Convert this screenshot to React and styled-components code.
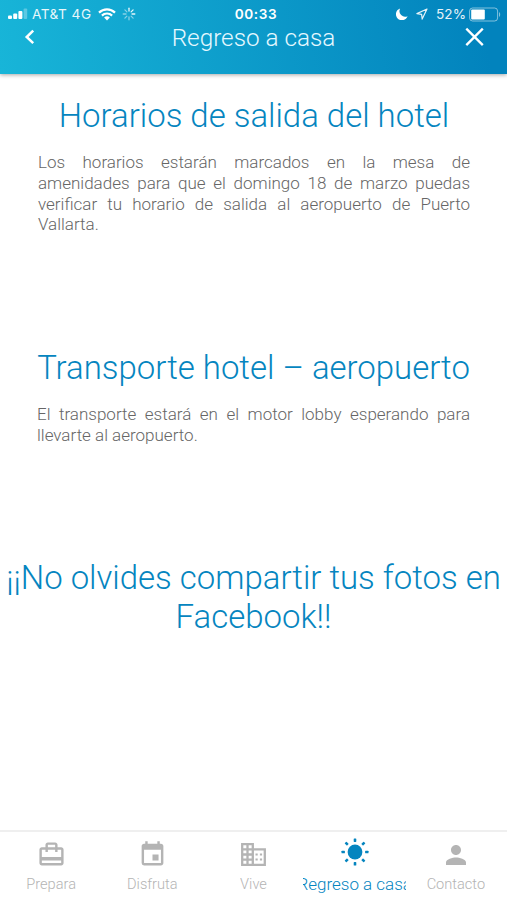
import React from "react";
import styled, { createGlobalStyle } from "styled-components";
import { MdCardTravel, MdEvent, MdPerson } from "react-icons/md";

const GlobalStyle = createGlobalStyle`
  * { box-sizing: border-box; }
  body { margin: 0; background: #fff; font-family: Roboto, "Liberation Sans", sans-serif; }
`;

const Screen = styled.div`
  width: 507px;
  height: 900px;
  display: flex;
  flex-direction: column;
  background: #fff;
  overflow: hidden;
`;

const Header = styled.header`
  flex: none;
  height: 74px;
  color: #fff;
  background: linear-gradient(81deg, #18b5d8 0%, #0283bd 95%);
  box-shadow: 0 1px 4px rgba(0, 0, 0, 0.35);
`;

const StatusBar = styled.div`
  height: 26px;
  padding: 1px 6px 0 8px;
  display: grid;
  grid-template-columns: 1fr auto 1fr;
  align-items: center;
  font-family: Inter, sans-serif;
  font-size: 13.6px;
  line-height: 26px;
`;

const StatusGroup = styled.div`
  display: flex;
  align-items: center;
  justify-content: ${(p) => (p.$end ? "flex-end" : "flex-start")};
  white-space: nowrap;
  svg { flex: none; display: block; }
`;

const StatusText = styled.span`
  margin: ${(p) => p.$margin || 0};
  letter-spacing: ${(p) => p.$spacing || 0};
  opacity: 0.9;
`;

const Clock = styled.span`
  font-weight: 600;
  font-size: 13.6px;
  letter-spacing: 0.6px;
  padding-left: 3px;
`;

const TitleBar = styled.div`
  height: 48px;
  padding: 0 22px 0 24px;
  display: grid;
  grid-template-columns: 20px 1fr 20px;
  align-items: start;
  svg { display: block; }
`;

const Title = styled.h1`
  margin: -2px 2px 0 0;
  text-align: center;
  font-size: 24.3px;
  font-weight: 300;
  line-height: 28px;
  color: #e6f8ff;
`;

const Main = styled.main`
  flex: 1;
  display: flex;
  flex-direction: column;
`;

const Section = styled.section`
  height: ${(p) => p.$height};
  padding: ${(p) => p.$padding};
`;

const Heading = styled.h2`
  margin: 0;
  text-align: center;
  white-space: nowrap;
  font-size: 32.95px;
  font-weight: 300;
  line-height: 39px;
  color: #0585bf;
`;

const Paragraph = styled.p`
  margin: 17px 0 0;
  text-align: justify;
  font-size: 17px;
  font-weight: 300;
  line-height: 20.8px;
  color: #666;
`;

const TabBar = styled.nav`
  flex: none;
  height: 70px;
  display: grid;
  grid-template-columns: repeat(5, 101.2px);
  justify-content: center;
  border-top: 2px solid #efefef;
`;

const Tab = styled.div`
  display: flex;
  flex-direction: column;
  align-items: center;
  min-width: 0;
  color: ${(p) => (p.$active ? "#0585bf" : "#b4b4b4")};
`;

const TabIcon = styled.div`
  height: 42px;
  padding-top: ${(p) => p.$top};
  svg { display: block; }
`;

const TabLabel = styled.span`
  width: ${(p) => (p.$active ? "103px" : "auto")};
  display: flex;
  justify-content: center;
  overflow: hidden;
  white-space: nowrap;
  font-size: ${(p) => (p.$active ? "17px" : "14.6px")};
  font-weight: 300;
  line-height: 20px;
`;

const Signal = () => (
  <svg width="20" height="12" viewBox="0 0 20 12" fill="#fff">
    <rect x="0" y="7.5" width="4" height="3.5" rx="1" />
    <rect x="5.2" y="5.5" width="4" height="5.5" rx="1" />
    <rect x="10.4" y="3" width="4" height="8" rx="1" />
    <rect x="15.6" y="0.5" width="3.6" height="10.5" rx="1" opacity="0.3" />
  </svg>
);

const Wifi = () => (
  <svg width="18" height="13" viewBox="0 0 18 13" fill="none" stroke="#fff" strokeWidth="2.2">
    <path d="M1 4.6a11.5 11.5 0 0 1 16 0" />
    <path d="M3.9 7.6a7.3 7.3 0 0 1 10.2 0" />
    <path d="M9 12.4 6.1 9.6a4.1 4.1 0 0 1 5.8 0Z" fill="#fff" stroke="none" />
  </svg>
);

const Spinner = () => (
  <svg width="14" height="14" viewBox="-7 -7 14 14" stroke="#fff" strokeWidth="1.3" strokeLinecap="round">
    {[0, 45, 90, 135, 180, 225, 270, 315].map((a, i) => (
      <path key={a} d="M0-3V-5.8" transform={`rotate(${a})`} opacity={i < 3 ? 1 : 0.55} />
    ))}
  </svg>
);

const Moon = () => (
  <svg width="12" height="12" viewBox="0 0 12 12" fill="#fff">
    <path d="M4.1.5A6 6 0 1 0 11.6 8.2 5.7 5.7 0 0 1 4.1.5Z" />
  </svg>
);

const Location = () => (
  <svg width="12" height="12" viewBox="0 0 12 12" fill="none" stroke="#fff" strokeWidth="1.2" strokeLinejoin="round">
    <path d="M11 1 .9 5.6l4.7.8.6 4.7Z" />
  </svg>
);

const Battery = () => (
  <svg width="32" height="15" viewBox="0 0 32 15">
    <rect x="0.6" y="1" width="28" height="13" rx="3" fill="none" stroke="#fff" strokeOpacity="0.5" />
    <rect x="2.2" y="2.6" width="13.6" height="9.8" rx="1" fill="#fff" />
    <path d="M30 5v5c1.6-.7 1.6-4.3 0-5Z" fill="#fff" opacity="0.5" />
  </svg>
);

const Back = () => (
  <svg width="12" height="22" viewBox="0 0 12 22" fill="none" stroke="#fff" strokeWidth="2.5">
    <path d="M9.2 4.6 2.7 11l6.5 6.2" />
  </svg>
);

const Close = () => (
  <svg width="20" height="22" viewBox="0 0 20 22" fill="none" stroke="#fff" strokeWidth="2.3">
    <path d="m1.3 2.6 16.5 16.5M17.8 2.6 1.3 19.1" />
  </svg>
);

const Building = () => (
  <svg width="25" height="23" viewBox="0 0 25 23" fill="none" stroke="currentColor" strokeWidth="2.3">
    <path d="M1.2 1.2h10.6v20.6H1.2zM6.5 1v21M1 6.3h11M1 11.5h11M1 16.7h11" />
    <path d="M12 6.3h11.8v15.5H12" />
    <path d="M14.5 11.5h2.2M18.9 11.5h2.2M14.5 16.5h2.2M18.9 16.5h2.2" strokeWidth="2" />
  </svg>
);

const Sun = () => (
  <svg width="28" height="28" viewBox="-14 -14 28 28" fill="currentColor">
    <circle r="7.4" />
    {[0, 45, 90, 135, 180, 225, 270, 315].map((a) => (
      <rect key={a} x="-1.3" y="-13.5" width="2.6" height="3.4" rx="0.6" transform={`rotate(${a})`} />
    ))}
  </svg>
);

const tabs = [
  { label: "Prepara", icon: <MdCardTravel size={29} />, top: "8px" },
  { label: "Disfruta", icon: <MdEvent size={29} />, top: "8px" },
  { label: "Vive", icon: <Building />, top: "11px" },
  { label: "Regreso a casa", icon: <Sun />, top: "6px", active: true },
  { label: "Contacto", icon: <MdPerson size={30} />, top: "8px" },
];

export default function App() {
  return (
    <Screen>
      <GlobalStyle />
      <Header>
        <StatusBar>
          <StatusGroup>
            <Signal />
            <StatusText $margin="0 6px 0 4px" $spacing="0.5px">AT&amp;T 4G</StatusText>
            <Wifi />
            <StatusText $margin="0 0 0 6px"><Spinner /></StatusText>
          </StatusGroup>
          <Clock>00:33</Clock>
          <StatusGroup $end>
            <Moon />
            <StatusText $margin="0 8px 0 8px"><Location /></StatusText>
            <StatusText $margin="0 3px 0 0">52%</StatusText>
            <Battery />
          </StatusGroup>
        </StatusBar>
        <TitleBar>
          <Back />
          <Title>Regreso a casa</Title>
          <Close />
        </TitleBar>
      </Header>
      <Main>
        <Section $height="251px" $padding="22px 37px 0 38px">
          <Heading>Horarios de salida del hotel</Heading>
          <Paragraph>
            Los horarios estarán marcados en la mesa de amenidades para que el domingo 18 de marzo
            puedas verificar tu horario de salida al aeropuerto de Puerto Vallarta.
          </Paragraph>
        </Section>
        <Section $height="211px" $padding="23px 37px 0 37px">
          <Heading>Transporte hotel – aeropuerto</Heading>
          <Paragraph>
            El transporte estará en el motor lobby esperando para llevarte al aeropuerto.
          </Paragraph>
        </Section>
        <Section $height="120px" $padding="22px 0 0">
          <Heading>
            ¡¡No olvides compartir tus fotos en
            <br />
            Facebook!!
          </Heading>
        </Section>
      </Main>
      <TabBar>
        {tabs.map(({ label, icon, active, top }) => (
          <Tab key={label} $active={active}>
            <TabIcon $top={top}>{icon}</TabIcon>
            <TabLabel $active={active}>{label}</TabLabel>
          </Tab>
        ))}
      </TabBar>
    </Screen>
  );
}
